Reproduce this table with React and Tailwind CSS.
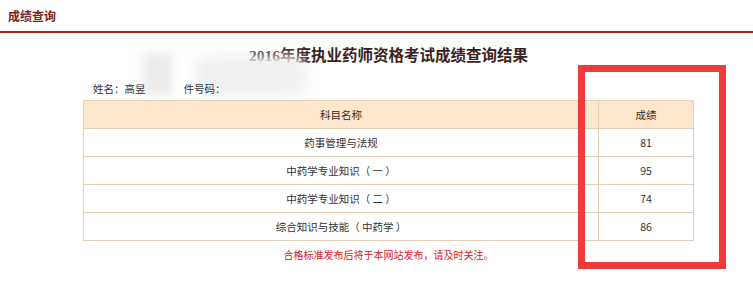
import React from 'react';

const SCORES = [
    { subject: '药事管理与法规', score: 81 },
    { subject: '中药学专业知识（ 一 ）', score: 95 },
    { subject: '中药学专业知识（ 二 ）', score: 74 },
    { subject: '综合知识与技能（ 中药学 ）', score: 86 },
];

const sans = { fontFamily: '"Noto Sans CJK SC", "Liberation Sans", sans-serif' };

export default function App() {
    return (
        <div className="relative w-[753px] h-[295px] bg-white overflow-hidden" style={sans}>
            {/* section header */}
            <div className="h-[33px] border-b-2 border-[#b8201c] flex items-center pl-[8px]">
                <span className="text-[12px] font-bold text-[#7a2418] leading-none">成绩查询</span>
            </div>

            <div className="ml-[83px] w-[611px] flex flex-col">
                <h1
                    className="text-center text-[15.5px] font-bold text-[#3b2220] mt-[13px] leading-[20px]"
                    style={{ fontFamily: '"Liberation Serif", "Noto Sans CJK SC", serif' }}
                >
                    2016年度执业药师资格考试成绩查询结果
                </h1>

                <div className="relative mt-[14px] pl-[10px] h-[18px] flex items-center text-[10.5px] text-[#333]">
                    {/* masked personal details */}
                    <div className="absolute left-[60px] top-[-28px] w-[30px] h-[44px] bg-[#ececec] blur-[4px] rounded" />
                    <div className="absolute left-[112px] top-[-24px] w-[110px] h-[40px] bg-[#efefef] blur-[6px] rounded-xl" />
                    <span className="relative">姓名：高昱</span>
                    <span className="relative ml-[30px] pl-[8px] bg-gradient-to-r from-white from-40% to-transparent to-40%">
                        件号码：
                    </span>
                </div>

                <table className="mt-[2px] w-full border-collapse text-[10.5px] text-[#333]">
                    <thead>
                        <tr className="bg-[#fde8cd] h-[28px]">
                            <th className="border border-[#e3cfb3] font-normal text-[#3a2a20] w-[515px]">科目名称</th>
                            <th className="border border-[#e3cfb3] font-normal text-[#3a2a20]">成绩</th>
                        </tr>
                    </thead>
                    <tbody>
                        {SCORES.map(row => (
                            <tr key={row.subject} className="h-[28px]">
                                <td className="border border-[#e3cfb3] text-center">{row.subject}</td>
                                <td className="border border-[#e3cfb3] text-center">{row.score}</td>
                            </tr>
                        ))}
                    </tbody>
                </table>

                <p className="mt-[6px] text-center text-[10px] text-[#d3211f]">
                    合格标准发布后将于本网站发布，请及时关注。
                </p>
            </div>

            {/* red highlight around the score column */}
            <div className="absolute left-[578px] top-[65px] w-[148px] h-[204px] border-[7px] border-[#f23a3a]" />
        </div>
    );
}
